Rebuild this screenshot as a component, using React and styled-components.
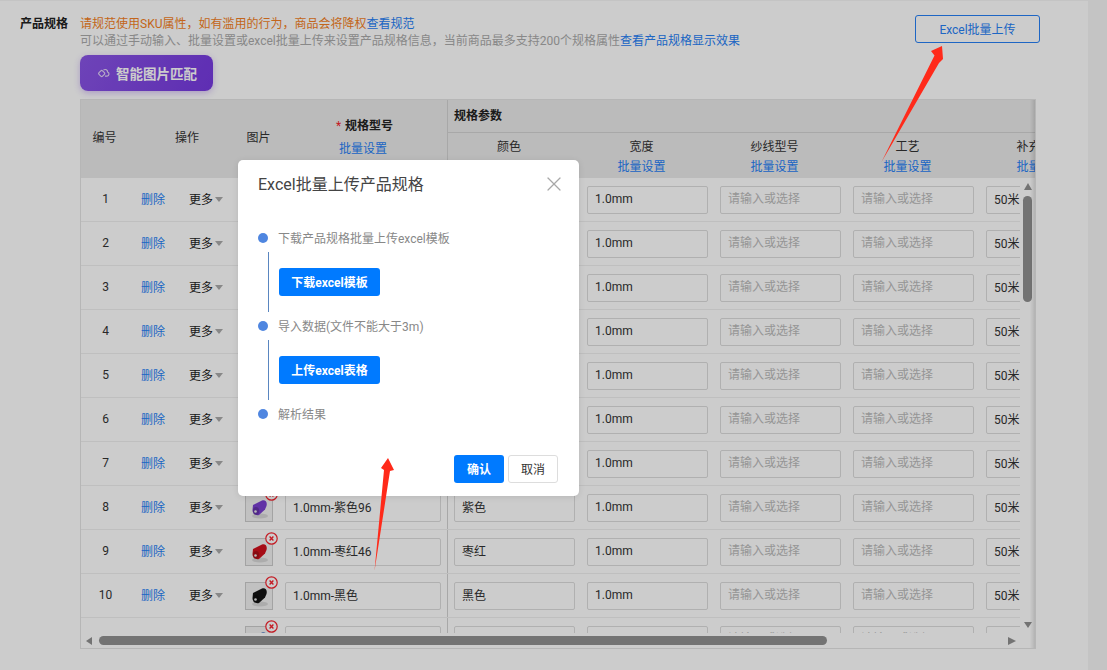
import React from 'react'
import styled, { createGlobalStyle } from 'styled-components'
import { X } from 'lucide-react'

const GlobalStyle = createGlobalStyle`
  html, body {
    margin: 0;
    padding: 0;
    background: #f5f5f5;
    font-family: Roboto, "Noto Sans CJK SC", sans-serif;
    font-size: 12px;
    color: #333;
  }
`

const Page = styled.div`
  position: relative;
  width: 1107px;
  height: 670px;
  overflow: hidden;
  background: #f5f5f5;
`

const Card = styled.section`
  box-sizing: border-box;
  width: 1088px;
  height: 670px;
  padding: 14px 48px 0 20px;
  background: #fff;
  border-top: 1px solid #f5f5f5;
  display: flex;
`

const SectionLabel = styled.div`
  flex: 0 0 60px;
  padding-top: 1px;
  line-height: 17px;
  font-weight: 700;
  color: #222;
`

const SectionBody = styled.div`
  flex: 1;
  min-width: 0;
`

const TopRow = styled.div`
  display: flex;
  justify-content: space-between;
  align-items: flex-start;
`

const Notes = styled.div`
  padding-top: 1px;
  line-height: 17px;
  white-space: nowrap;
`

const Warn = styled.div`
  color: #f47f24;
`

const Hint = styled.div`
  color: #aaa;
`

const TextLink = styled.a`
  color: #2680f5;
  cursor: pointer;
`

const OutlineButton = styled.button`
  box-sizing: border-box;
  width: 125px;
  height: 28px;
  padding: 0 0 2px;
  border: 1px solid #2680f5;
  border-radius: 3px;
  background: #fff;
  color: #2680f5;
  font: inherit;
`

const MatchButton = styled.button`
  display: flex;
  align-items: center;
  gap: 6px;
  box-sizing: border-box;
  width: 133px;
  height: 36px;
  margin-top: 5px;
  padding: 0 0 0 17px;
  border: 0;
  border-radius: 8px;
  background: linear-gradient(120deg, #8a55e6, #7639e0);
  box-shadow: 0 2px 6px rgba(118, 57, 224, 0.3);
  color: #fff;
  font: inherit;
  font-size: 13.5px;
  font-weight: 700;
`

const TableShell = styled.div`
  position: relative;
  box-sizing: border-box;
  display: grid;
  grid-template-columns: 939px 15px;
  grid-template-rows: 78px 455px 15px;
  width: 956px;
  margin-top: 8px;
  border: 1px solid #e4e4e4;
  background: #fff;
  &::after {
    content: "";
    position: absolute;
    top: 0;
    right: 0;
    bottom: 0;
    width: 5px;
    background: linear-gradient(90deg, transparent, rgba(0, 0, 0, 0.12));
  }
`

const BodyViewport = styled.div`
  overflow: hidden;
  min-width: 0;
`

const HeadRow = styled.div`
  grid-column: 1 / span 2;
  display: flex;
  overflow: hidden;
  background: #eaeaea;
`

const HeadCell = styled.div`
  box-sizing: border-box;
  flex: 0 0 ${(p) => p.$w}px;
  display: flex;
  flex-direction: column;
  align-items: center;
  justify-content: center;
  padding-right: ${(p) => p.$pr || 0}px;
  padding-bottom: 2px;
  line-height: 20px;
  color: #333;
`

const ModelHead = styled(HeadCell)`
  border-right: 1px solid #d2d2d2;
  padding-bottom: 4px;
  gap: 3px;
`

const ModelTitle = styled.span`
  margin-left: 3px;
  color: #222;
  font-weight: 700;
`

const Star = styled.span`
  margin-right: 4px;
  color: #f5222d;
  font-weight: 400;
`

const ParamHead = styled.div`
  flex: 1;
`

const ParamTitle = styled.div`
  box-sizing: border-box;
  height: 33px;
  padding-left: 6px;
  line-height: 32px;
  border-bottom: 1px solid #d2d2d2;
  font-weight: 700;
  color: #222;
`

const ParamCols = styled.div`
  display: flex;
  height: 45px;
`

const ParamCol = styled.div`
  box-sizing: border-box;
  flex: 0 0 ${(p) => (p.$first ? 127 : 133)}px;
  padding: 4px ${(p) => (p.$first ? 5 : 0)}px 0 0;
  display: flex;
  flex-direction: column;
  align-items: center;
  line-height: 20px;
  white-space: nowrap;
`

const Row = styled.div`
  box-sizing: border-box;
  display: flex;
  align-items: center;
  width: 1100px;
  height: 44px;
  border-bottom: 1px solid #efefef;
`

const NumCell = styled.div`
  flex: 0 0 49px;
  padding-bottom: 2px;
  text-align: center;
`

const ActionCell = styled.div`
  box-sizing: border-box;
  flex: 0 0 114px;
  display: flex;
  padding: 0 0 2px 11px;
  gap: 24px;
`

const More = styled.span`
  display: inline-flex;
  align-items: center;
  gap: 2px;
  color: #222;
  &::after {
    content: "";
    margin-top: 2px;
    border: 4px solid transparent;
    border-top: 5px solid #aaa;
    border-bottom: 0;
  }
`

const ThumbCell = styled.div`
  position: relative;
  box-sizing: border-box;
  flex: 0 0 35px;
  height: 28px;
  padding-left: 1px;
`

const Thumb = styled.svg`
  display: block;
  box-sizing: border-box;
  width: 28px;
  height: 28px;
  border: 1px solid #ccc;
`

const RemoveBadge = styled.svg`
  position: absolute;
  top: -6px;
  left: 21px;
  width: 13px;
  height: 13px;
`

const ModelCell = styled.div`
  box-sizing: border-box;
  flex: 0 0 169px;
  align-self: stretch;
  display: flex;
  align-items: center;
  padding: 0 6px;
  border-right: 1px solid #d2d2d2;
`

const ParamCell = styled.div`
  flex: 0 0 133px;
  box-sizing: border-box;
  padding: 0 6px;
`

const Field = styled.input`
  box-sizing: border-box;
  display: block;
  width: 100%;
  height: 28px;
  padding: 0 7px 2px;
  border: 1px solid #dcdcdc;
  border-radius: 2px;
  background: #fff;
  color: #333;
  font: inherit;
  outline: none;
  &::placeholder {
    color: #bbb;
    opacity: 1;
  }
`

const Thumbbar = styled.div`
  flex: 0 0 auto;
  background: #909090;
  border-radius: 5px;
`

const VScroll = styled.div`
  box-sizing: border-box;
  display: flex;
  flex-direction: column;
  align-items: center;
  width: 9px;
  margin-left: 3px;
  padding: 5px 0;
`

const VThumb = styled(Thumbbar)`
  width: 9px;
  height: 106px;
  margin-top: 6px;
`

const Spacer = styled.div`
  flex: 1;
`

const HScroll = styled.div`
  grid-column: 1 / span 2;
  display: flex;
  align-items: center;
  padding: 0 19px 0 5px;
`

const HThumb = styled(Thumbbar)`
  width: 728px;
  height: 9px;
  margin-left: 7px;
`

const Tri = styled.span`
  width: 0;
  height: 0;
  border-style: solid;
  border-color: transparent;
  ${(p) => p.$dir === 'up' && 'border-width: 0 4.5px 7px; border-bottom-color: #909090;'}
  ${(p) => p.$dir === 'down' && 'border-width: 6px 4.5px 0; border-top-color: #909090;'}
  ${(p) => p.$dir === 'left' && 'border-width: 4.5px 6px 4.5px 0; border-right-color: #909090;'}
  ${(p) => p.$dir === 'right' && 'border-width: 4.5px 0 4.5px 8px; border-left-color: #909090;'}
`

const Mask = styled.div`
  position: absolute;
  inset: 0;
  background: rgba(0, 0, 0, 0.2);
`

const Modal = styled.div`
  position: absolute;
  top: 160px;
  left: 238px;
  box-sizing: border-box;
  width: 341px;
  height: 336px;
  padding: 0 21px 0 20px;
  border-radius: 5px;
  background: #fff;
  box-shadow: 0 1px 6px rgba(0, 0, 0, 0.1);
`

const ModalHead = styled.div`
  box-sizing: border-box;
  display: flex;
  justify-content: space-between;
  align-items: center;
  height: 47px;
  margin-bottom: 17px;
  padding-bottom: 2px;
  color: #444;
  font-size: 16px;
  svg { color: #a8a8a8; margin: 2px -8px 0 0; }
`

const StepHead = styled.div`
  box-sizing: border-box;
  display: flex;
  align-items: center;
  gap: 10px;
  height: 28px;
  padding-bottom: 2px;
  color: #888;
  &::before {
    content: "";
    width: 10px;
    height: 10px;
    margin-top: 2px;
    border-radius: 50%;
    background: #4f86e0;
  }
`

const StepBody = styled.div`
  box-sizing: border-box;
  height: 60px;
  margin-left: 10px;
  padding: 16px 0 0 10px;
  border-left: 1px solid #5a86c0;
`

const PrimaryButton = styled.button`
  box-sizing: border-box;
  width: ${(p) => p.$w}px;
  height: 28px;
  padding: 0 0 2px;
  border: 0;
  border-radius: 3px;
  background: #007aff;
  color: #fff;
  font: inherit;
  font-weight: 700;
`

const ModalFoot = styled.div`
  display: flex;
  justify-content: flex-end;
  gap: 4px;
  margin-top: 27px;
`

const PlainButton = styled.button`
  box-sizing: border-box;
  width: 50px;
  height: 28px;
  padding: 0 0 2px;
  border: 1px solid #ddd;
  border-radius: 3px;
  background: #fff;
  color: #333;
  font: inherit;
`

const ArrowLayer = styled.svg`
  position: absolute;
  inset: 0;
  width: 1107px;
  height: 670px;
  pointer-events: none;
`

const rows = [
  { no: 1 },
  { no: 2 },
  { no: 3 },
  { no: 4 },
  { no: 5 },
  { no: 6 },
  { no: 7 },
  { no: 8, model: '1.0mm-紫色96', color: '紫色', spool: '#7a3fd0' },
  { no: 9, model: '1.0mm-枣红46', color: '枣红', spool: '#d0101c' },
  { no: 10, model: '1.0mm-黑色', color: '黑色', spool: '#151515' },
  { no: '', spool: '#4a78c0', empty: true },
]

const paramHeads = ['颜色', '宽度', '纱线型号', '工艺', '补充说明']

function Spool({ color }) {
  return (
    <Thumb viewBox="0 0 26 26">
      <rect width="26" height="26" fill="#f2f2f2" />
      <ellipse cx="14" cy="21" rx="8" ry="2.5" fill="#d8d8d8" />
      <path d="M7 10 L16 5.5 C19.5 4.5 21.5 7 20.5 11 L19 14.5 L13 20 C10 21 6.5 19 6.5 15 Z" fill={color} />
      <ellipse cx="10" cy="16" rx="3.2" ry="4" fill="#000" fillOpacity="0.18" />
      <circle cx="9.5" cy="16.5" r="1.3" fill="#e8e8e8" />
    </Thumb>
  )
}

function TableRow({ row }) {
  return (
    <Row>
      <NumCell>{row.no}</NumCell>
      <ActionCell>
        {row.no && <TextLink>删除</TextLink>}
        {row.no && <More>更多</More>}
      </ActionCell>
      <ThumbCell>
        {row.spool && <Spool color={row.spool} />}
        {row.spool && (
          <RemoveBadge viewBox="0 0 13 13">
            <circle cx="6.5" cy="6.5" r="5.7" fill="#fff" stroke="#f5222d" strokeWidth="1.2" />
            <path d="M4.6 4.6 L8.4 8.4 M8.4 4.6 L4.6 8.4" stroke="#f5222d" strokeWidth="1.4" />
          </RemoveBadge>
        )}
      </ThumbCell>
      <ModelCell>
        <Field readOnly value={row.model || ''} />
      </ModelCell>
      <ParamCell>
        <Field readOnly value={row.color || ''} />
      </ParamCell>
      <ParamCell>
        <Field readOnly value={row.empty ? '' : '1.0mm'} />
      </ParamCell>
      <ParamCell>
        <Field readOnly placeholder="请输入或选择" />
      </ParamCell>
      <ParamCell>
        <Field readOnly placeholder="请输入或选择" />
      </ParamCell>
      <ParamCell>
        <Field readOnly value={row.empty ? '' : '50米'} />
      </ParamCell>
    </Row>
  )
}

export default function App() {
  return (
    <>
      <GlobalStyle />
      <Page>
        <Card>
          <SectionLabel>产品规格</SectionLabel>
          <SectionBody>
            <TopRow>
              <Notes>
                <Warn>
                  请规范使用SKU属性，如有滥用的行为，商品会将降权<TextLink>查看规范</TextLink>
                </Warn>
                <Hint>
                  可以通过手动输入、批量设置或excel批量上传来设置产品规格信息，当前商品最多支持200个规格属性
                  <TextLink>查看产品规格显示效果</TextLink>
                </Hint>
              </Notes>
              <OutlineButton>Excel批量上传</OutlineButton>
            </TopRow>
            <MatchButton>
              <svg width="13" height="11" viewBox="0 0 13 11" fill="none" stroke="#e2d6f7" strokeWidth="1.2">
                <rect x="2.2" y="3" width="5" height="5" rx="1.2" transform="rotate(45 4.7 5.5)" />
                <path d="M6.5 2 C8.5 0.8 10.6 2 10.6 4 C12.6 4.6 12.4 8 10 8.2 L8 8.2" />
              </svg>
              智能图片匹配
            </MatchButton>
            <TableShell>
              <HeadRow>
                <HeadCell $w={49} $pr={2}>编号</HeadCell>
                <HeadCell $w={114}>操作</HeadCell>
                <HeadCell $w={35} $pr={6}>图片</HeadCell>
                <ModelHead $w={169}>
                  <ModelTitle><Star>*</Star>规格型号</ModelTitle>
                  <TextLink>批量设置</TextLink>
                </ModelHead>
                <ParamHead>
                  <ParamTitle>规格参数</ParamTitle>
                  <ParamCols>
                    {paramHeads.map((name, i) => (
                      <ParamCol key={name} $first={i === 0}>
                        {name}
                        <TextLink>批量设置</TextLink>
                      </ParamCol>
                    ))}
                  </ParamCols>
                </ParamHead>
              </HeadRow>
              <BodyViewport>
                {rows.map((row, i) => (
                  <TableRow key={i} row={row} />
                ))}
              </BodyViewport>
              <VScroll>
                <Tri $dir="up" />
                <VThumb />
                <Spacer />
                <Tri $dir="down" />
              </VScroll>
              <HScroll>
                <Tri $dir="left" />
                <HThumb />
                <Spacer />
                <Tri $dir="right" />
              </HScroll>
            </TableShell>
          </SectionBody>
        </Card>
        <Mask />
        <Modal>
          <ModalHead>
            Excel批量上传产品规格
            <X size={24} strokeWidth={1.2} />
          </ModalHead>
          <StepHead>下载产品规格批量上传excel模板</StepHead>
          <StepBody>
            <PrimaryButton $w={101}>下载excel模板</PrimaryButton>
          </StepBody>
          <StepHead>导入数据(文件不能大于3m)</StepHead>
          <StepBody>
            <PrimaryButton $w={101}>上传excel表格</PrimaryButton>
          </StepBody>
          <StepHead>解析结果</StepHead>
          <ModalFoot>
            <PrimaryButton $w={50}>确认</PrimaryButton>
            <PlainButton>取消</PlainButton>
          </ModalFoot>
        </Modal>
        <ArrowLayer viewBox="0 0 1107 670">
          <polygon fill="#ff2a1a" points="881.5,162 934.5,55.5 931,51 942,46 943,59 939,63" />
          <polygon fill="#ff2a1a" points="374.5,571 384,470 381,468 388,458 394,470 390,471" />
        </ArrowLayer>
      </Page>
    </>
  )
}
